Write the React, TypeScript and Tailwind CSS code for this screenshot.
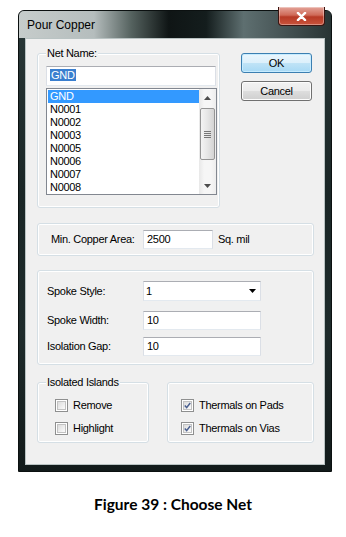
import type { ReactNode } from 'react';

const NETS = ['GND', 'N0001', 'N0002', 'N0003', 'N0005', 'N0006', 'N0007', 'N0008'];

const ui = "font-['Liberation_Sans',Arial,sans-serif] text-[11px] tracking-[-0.3px] text-black";
const field = 'h-[19px] border border-t-[#abadb3] border-x-[#dbdfe6] border-b-[#e3e9ef] bg-white pl-[3px] leading-[17px]';

// Win7 group box: label sits on the top border, body gets its own padding
function Group({ label, className, body, children }: { label?: string; className: string; body: string; children: ReactNode }) {
  return (
    <div className={`flex flex-col rounded-[3px] border border-[#d5dfe5] shadow-[inset_0_0_0_1px_#fff] ${className}`}>
      {label && <span className="-mt-[7px] ml-[8px] self-start bg-[#f0f0f0] px-[1px] leading-[13px]">{label}</span>}
      <div className={`flex ${body}`}>{children}</div>
    </div>
  );
}

function Check({ on, label }: { on?: boolean; label: string }) {
  return (
    <div className="flex h-[13px] items-center gap-[5px]">
      <span className="flex size-[13px] items-center justify-center border border-[#8e8f8f] bg-white p-[1px]">
        <span className="flex size-full items-center justify-center border border-[#c2c2c2] bg-[linear-gradient(135deg,#dcdcdc,#fbfbfb)]">
          {on && (
            <svg viewBox="0 0 9 9" className="size-[9px]" aria-hidden>
              <path d="M1 4.6 3.4 7.2 8 1.2" fill="none" stroke="#4a5f8f" strokeWidth="1.9" />
            </svg>
          )}
        </span>
      </span>
      <span className="leading-[13px]">{label}</span>
    </div>
  );
}

function Arrow({ down }: { down?: boolean }) {
  return (
    <svg viewBox="0 0 7 4" className="h-[4px] w-[7px]" aria-hidden>
      <path d={down ? 'M0 0h7L3.5 4z' : 'M0 4h7L3.5 0z'} fill="#4d4d4d" />
    </svg>
  );
}

export default function App() {
  return (
    <div className="flex h-[537px] w-[346px] flex-col bg-white">
      {/* window frame */}
      <div className="ml-[18px] mt-[10px] flex h-[462px] w-[314px] flex-col rounded-t-[6px] border border-[#0b1010] bg-[linear-gradient(180deg,#2a3838,#1a2626_40%,#1e2b2b_70%,#121a1a)] px-[6px] pb-[6px]">
        <div className="-mx-[6px] flex h-[27px] items-center justify-between rounded-t-[5px] bg-[linear-gradient(90deg,#c6cccb_0%,#b5bdbd_24%,#55625f_36%,#0f1515_48%,#141d1d_60%,#5e6f70_72%,#4f5e5f_80%,#283434_100%)] pl-[8px] pr-[6px]">
          <span className="font-['Liberation_Sans',Arial,sans-serif] text-[12px] text-black">Pour Copper</span>
          <span className="-mt-[4px] flex h-[19px] w-[47px] items-center justify-center self-start rounded-b-[4px] border border-t-0 border-[#3b1410] bg-[linear-gradient(180deg,#e4a49a_0%,#cf6a58_45%,#b73a26_55%,#c9543c_100%)] shadow-[inset_0_0_0_1px_rgba(255,255,255,0.35)]">
            <svg viewBox="0 0 12 10" className="h-[9px] w-[11px]" aria-hidden>
              <path d="M2 1l8 8M10 1 2 9" stroke="#fff" strokeWidth="2.6" strokeLinecap="round" />
            </svg>
          </span>
        </div>

        {/* client area */}
        <div className={`flex flex-1 flex-col border border-[#b9c3c3] bg-[#f0f0f0] pl-[11px] ${ui}`}>
          <div className="mt-[14px] flex">
            <Group label="Net Name:" className="h-[155px] w-[183px]" body="flex-col px-[8px]">
              <div className={`mt-[6px] h-[20px] w-[170px] ${field.replace('h-[19px] ', '')}`}>
                <span className="bg-[#3a7fcf] px-[1px] text-white">GND</span>
              </div>
              <div className="mt-[2px] flex h-[107px] w-[171px] border border-[#828790] bg-white">
                <div className="flex flex-1 flex-col pl-[1px] pt-[1px]">
                  {NETS.map((n, i) => (
                    <div key={n} className={`h-[13px] pl-[2px] leading-[13px] ${i === 0 ? 'bg-[#3399ff] text-white' : ''}`}>
                      {n}
                    </div>
                  ))}
                </div>
                <div className="flex w-[17px] flex-col bg-[linear-gradient(90deg,#e8e8e8,#f6f6f6_30%,#f6f6f6_70%,#ededed)]">
                  <div className="flex h-[17px] items-center justify-center">
                    <Arrow />
                  </div>
                  <div className="mx-[1px] mt-[2px] flex h-[52px] items-center justify-center rounded-[2px] border border-[#959595] bg-[linear-gradient(90deg,#f4f4f4,#e6e6e6_50%,#d4d4d4)]">
                    <div className="flex flex-col gap-[1px]">
                      <span className="h-px w-[7px] bg-[#777]" />
                      <span className="h-px w-[7px] bg-[#777]" />
                      <span className="h-px w-[7px] bg-[#777]" />
                      <span className="h-px w-[7px] bg-[#777]" />
                    </div>
                  </div>
                  <div className="flex-1" />
                  <div className="flex h-[17px] items-center justify-center">
                    <Arrow down />
                  </div>
                </div>
              </div>
            </Group>

            <div className="ml-[21px] flex flex-col gap-[8px]">
              <button className="h-[20px] w-[71px] rounded-[3px] border border-[#3c7fb1] bg-[linear-gradient(180deg,#ebf6fd_0%,#dcf0fb_48%,#bfe3f6_52%,#a7d9f5_100%)] text-[11px] leading-[18px] shadow-[inset_0_0_0_1px_#c7ecff]">
                OK
              </button>
              <button className="h-[20px] w-[71px] rounded-[3px] border border-[#707070] bg-[linear-gradient(180deg,#f2f2f2_0%,#ebebeb_48%,#dddddd_52%,#cfcfcf_100%)] text-[11px] leading-[18px] shadow-[inset_0_0_0_1px_#fcfcfc]">
                Cancel
              </button>
            </div>
          </div>

          <Group className="mt-[15px] h-[33px] w-[277px] justify-center" body="items-center pl-[13px]">
            <span className="w-[92px]">Min. Copper Area:</span>
            <div className={`w-[70px] ${field}`}>2500</div>
            <span className="ml-[5px]">Sq. mil</span>
          </Group>

          <Group className="mt-[14px] h-[95px] w-[277px]" body="flex-col pl-[9px] pt-[10px]">
            <div className="flex items-center">
              <span className="w-[96px]">Spoke Style:</span>
              <div className="flex h-[20px] w-[118px] items-center justify-between border border-t-[#abadb3] border-x-[#dbdfe6] border-b-[#e3e9ef] bg-white pl-[2px] pr-[4px]">
                <span>1</span>
                <svg viewBox="0 0 7 4" className="h-[4px] w-[7px]" aria-hidden>
                  <path d="M0 0h7L3.5 4z" fill="#000" />
                </svg>
              </div>
            </div>
            <div className="mt-[10px] flex items-center">
              <span className="w-[96px]">Spoke Width:</span>
              <div className={`w-[118px] ${field}`}>10</div>
            </div>
            <div className="mt-[7px] flex items-center">
              <span className="w-[96px]">Isolation Gap:</span>
              <div className={`w-[118px] ${field}`}>10</div>
            </div>
          </Group>

          <div className="mt-[17px] flex gap-[18px]">
            <Group label="Isolated Islands" className="h-[61px] w-[112px]" body="flex-col gap-[10px] pl-[17px] pt-[10px]">
              <Check label="Remove" />
              <Check label="Highlight" />
            </Group>
            <Group className="h-[61px] w-[147px]" body="flex-col gap-[10px] pl-[13px] pt-[16px]">
              <Check on label="Thermals on Pads" />
              <Check on label="Thermals on Vias" />
            </Group>
          </div>
        </div>
      </div>

      <p className="mt-[22px] text-center font-['Lato','Open_Sans',sans-serif] text-[15.5px] font-bold leading-[20px] text-black">
        Figure 39 : Choose Net
      </p>
    </div>
  );
}
